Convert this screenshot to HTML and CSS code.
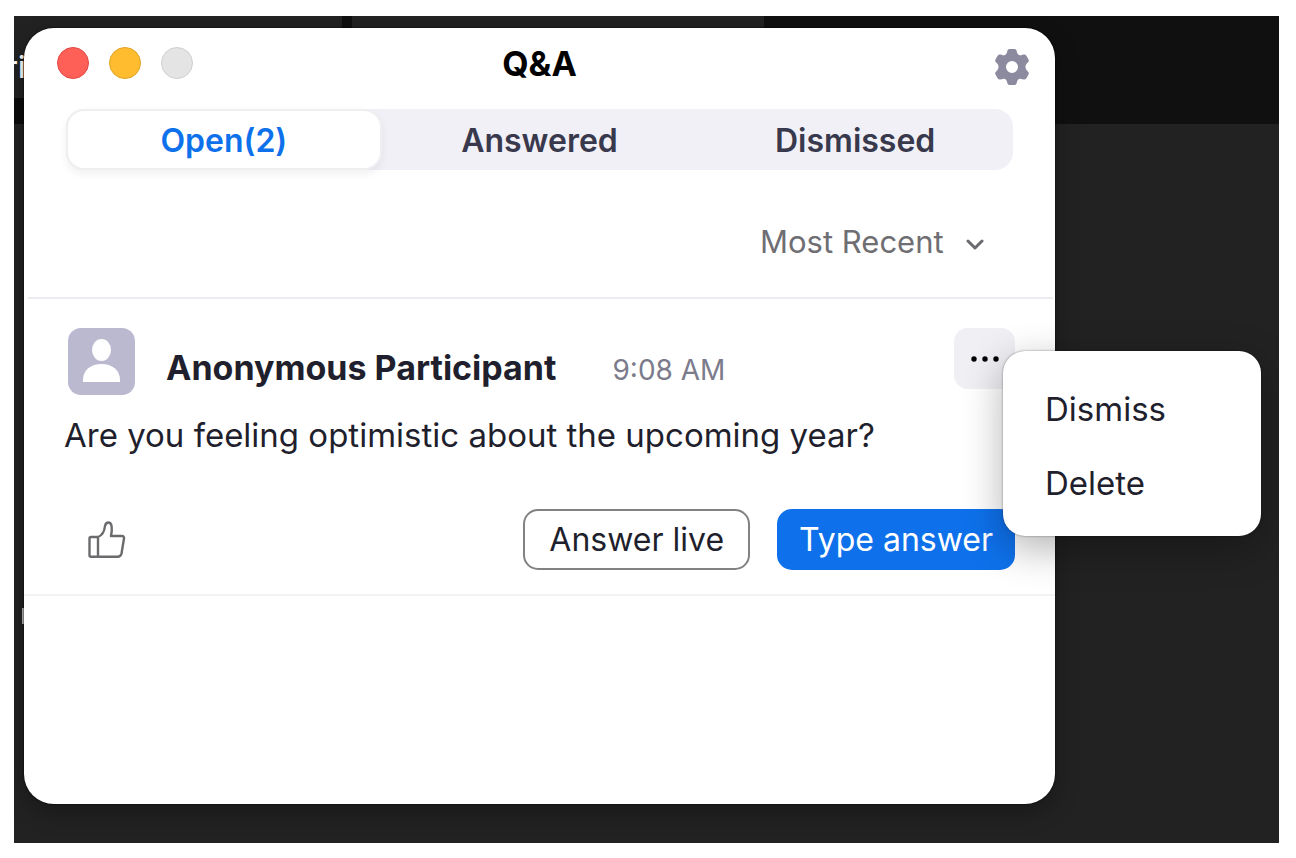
FILE: index.html
```html
<!DOCTYPE html>
<html lang="en">

<head>
    <meta charset="UTF-8" />
    <meta name="viewport" content="width=device-width, initial-scale=1.0" />
    <title>Q&amp;A</title>
    <link rel="stylesheet" href="styles.css">
</head>

<body>
    <div class="desktop">
        <!-- text of the meeting window, behind the panel -->
        <span class="behind-text">ri</span>
        <span class="behind-mark"></span>

        <main class="window">
            <header class="titlebar">
                <div class="lights">
                    <button class="light red" aria-label="Close"></button>
                    <button class="light yellow" aria-label="Minimize"></button>
                    <button class="light gray" aria-label="Zoom" disabled></button>
                </div>
                <h1 class="title">Q&amp;A</h1>
                <button class="settings" aria-label="Settings">
                    <svg width="36" height="38" viewBox="0 0 36 38">
                        <path fill="#8c8a9f" fill-rule="evenodd" d="M15.500 1h5c1.400 0 2 1 2.300 2.500.4 2 1.200 3 2.200 3.500 1 .5 2 .4 3.500-.2 1.600-.6 3-.5 3.700.6l2.200 3.900c.8 1.400.4 2.500-.8 3.500C32 16.300 31.500 17.500 31.500 19s.5 2.700 2.100 4.200c1.200 1 1.600 2.100.8 3.500l-2.200 3.900c-.7 1.100-2.100 1.200-3.700.6-1.500-.6-2.500-.7-3.500-.2s-1.800 1.500-2.200 3.500C22.500 36 21.900 37 20.500 37h-5c-1.400 0-2-1-2.300-2.500-.4-2-1.200-3-2.200-3.500-1-.5-2-.4-3.500.2-1.600.6-3 .5-3.700-.6l-2.200-3.900c-.8-1.400-.4-2.500.8-3.500C4 21.700 4.500 20.500 4.500 19S4 16.300 2.400 14.800c-1.200-1-1.600-2.100-.8-3.500l2.200-3.900c.7-1.100 2.100-1.200 3.700-.6 1.500.6 2.500.7 3.500.2s1.800-1.500 2.200-3.500C13.500 2 14.100 1 15.500 1zM18 13a6 6 0 1 0 0 12 6 6 0 0 0 0-12z"/>
                    </svg>
                </button>
            </header>

            <nav class="tabs">
                <button class="tab active">Open(2)</button>
                <button class="tab">Answered</button>
                <button class="tab">Dismissed</button>
            </nav>

            <div class="filter">
                <select class="sort" id="sort" aria-label="Sort questions">
                    <option>Most Recent</option>
                </select>
                <svg class="chevron" width="18" height="12" viewBox="0 0 18 12">
                    <path d="M2 2l7 7 7-7" fill="none" stroke="#6a6a70" stroke-width="3" stroke-linecap="round" stroke-linejoin="round"/>
                </svg>
            </div>

            <article class="question">
                <div class="question-head">
                    <svg class="avatar" width="67" height="67" viewBox="0 0 67 67">
                        <rect width="67" height="67" rx="13" fill="#bbb9d0"/>
                        <ellipse cx="33.500" cy="22" rx="9.500" ry="11" fill="#fff"/>
                        <path d="M15 54v-2c0-10 8-16 18.500-16S52 42 52 52v2z" fill="#fff"/>
                    </svg>
                    <h2 class="name">Anonymous Participant</h2>
                    <time class="time">9:08 AM</time>
                    <div class="more-wrap">
                        <button class="more" aria-label="More options">
                            <svg width="28" height="6" viewBox="0 0 28 6">
                                <circle cx="3" cy="3" r="2.700"/>
                                <circle cx="14" cy="3" r="2.700"/>
                                <circle cx="25" cy="3" r="2.700"/>
                            </svg>
                        </button>
                        <div class="menu">
                            <button class="menu-item">Dismiss</button>
                            <button class="menu-item">Delete</button>
                        </div>
                    </div>
                </div>

                <p class="question-text">Are you feeling optimistic about the upcoming year?</p>

                <div class="actions">
                    <button class="like" aria-label="Upvote">
                        <svg width="38" height="38" viewBox="0 0 38 38" fill="none" stroke="#6b6b6e" stroke-width="2.400" stroke-linejoin="round">
                            <path d="M10 16v20M3 16h7c5-2 6.500-6 7-11C17.500 2.500 19 1.500 20.500 1.500c3.500 0 4 6 2.500 13.500h11c1.500 0 2.300 1 2 2.500l-2.500 15c-.4 2-1.800 3.200-4 3.200H3c-1 0-1.500-.5-1.500-1.500V17.500C1.500 16.500 2 16 3 16z"/>
                        </svg>
                    </button>
                    <button class="btn btn-live">Answer live</button>
                    <button class="btn btn-type">Type answer</button>
                </div>
            </article>
        </main>
    </div>
</body>

</html>
```
FILE: styles.css
```css
* {
    box-sizing: border-box;
}

body {
    margin: 0;
    padding: 16px 17px 15px 14px;
    min-height: 100vh;
    display: flex;
    background: #fff;
    color: #1f1f2d;
    font-family: Inter, "Liberation Sans", sans-serif;
}

button {
    font-family: inherit;
    color: inherit;
    border: none;
    background: none;
    padding: 0;
    cursor: pointer;
}

svg {
    display: block;
}

/* dark meeting window behind the panel */
.desktop {
    position: relative;
    flex: 1;
    display: flex;
    padding: 12px 224px 39px 10px;
    overflow: hidden;
    background-color: #222;
    background-image:
        linear-gradient(#101010, #101010),
        linear-gradient(#101010, #101010),
        linear-gradient(#0c0c0c, #0c0c0c);
    background-repeat: no-repeat;
    background-size: 515px 108px, 10px 82px, 328px 26px;
    background-position: 100% 0, 328px 0, 0 82px;
}

.behind-text {
    position: absolute;
    left: -8px;
    top: 32px;
    color: #fff;
    font-size: 30px;
    font-weight: 500;
    line-height: 38px;
}

.behind-mark {
    position: absolute;
    left: 8px;
    top: 592px;
    width: 6px;
    height: 16px;
    background: #bbb;
}

/* panel */
.window {
    position: relative;
    flex: 1;
    background: #fff;
    border-radius: 30px;
    box-shadow: 0 0 2px #000, 0 8px 24px rgba(0, 0, 0, 0.3);
}

.titlebar {
    display: grid;
    grid-template-columns: 1fr auto 1fr;
    align-items: start;
    padding: 19px 25px 0;
}

.lights {
    display: flex;
    gap: 20px;
    padding-left: 8px;
}

.light {
    width: 32px;
    height: 32px;
    border-radius: 50%;
}

.red {
    background: #fe5f57;
    border: 1px solid #e04b45;
}

.yellow {
    background: #febc2e;
    border: 1px solid #e0a32a;
}

.gray {
    background: #e4e4e4;
    border: 1px solid #cfcfcf;
}

.title {
    margin: 0;
    font-size: 34px;
    line-height: 34px;
    font-weight: 700;
    color: #000;
}

.settings {
    justify-self: end;
    padding-top: 1px;
}

/* tabs */
.tabs {
    display: grid;
    grid-template-columns: repeat(3, 1fr);
    margin: 23px 42px 0;
    border-radius: 18px;
    background: #f1f0f7;
}

.tab {
    height: 61px;
    padding-top: 2px;
    border-radius: 18px;
    font-size: 32px;
    font-weight: 600;
    color: #39394d;
}

.active {
    background: #fff;
    border: 2px solid #efeff2;
    box-shadow: 0 4px 10px rgba(0, 0, 0, 0.06);
    color: #0e71eb;
}

/* sort order */
.filter {
    display: flex;
    justify-content: flex-end;
    align-items: center;
    gap: 22px;
    margin: 0 2px 0 4px;
    padding: 52px 69px 35px 0;
    border-bottom: 2px solid #ebebf0;
}

.sort {
    appearance: none;
    border: none;
    background: none;
    padding: 0;
    font-family: inherit;
    font-size: 31px;
    line-height: 40px;
    color: #6e6e73;
}

.chevron {
    margin-top: 6px;
}

/* question */
.question {
    padding: 29px 40px 24px;
    border-bottom: 2px solid #f3f3f5;
}

.question-head {
    display: flex;
    align-items: center;
    padding-left: 4px;
}

.name {
    margin: 12px 0 0 31px;
    font-size: 34px;
    line-height: 40px;
    font-weight: 700;
}

.time {
    margin: 16px 0 0 56px;
    font-size: 28px;
    line-height: 36px;
    color: #7b7b8c;
}

.more-wrap {
    position: relative;
    align-self: flex-start;
    margin-left: auto;
}

.more {
    display: flex;
    align-items: center;
    justify-content: center;
    width: 61px;
    height: 61px;
    border-radius: 14px;
    background: #efeff4;
}

.menu {
    position: absolute;
    left: 49px;
    top: 23px;
    width: 258px;
    padding: 21px 0 16px;
    border-radius: 22px;
    background: #fff;
    box-shadow: 0 0 2px rgba(0, 0, 0, 0.5), 0 12px 40px rgba(0, 0, 0, 0.3);
}

.menu-item {
    display: block;
    width: 100%;
    padding-left: 42px;
    font-size: 33px;
    line-height: 74px;
    text-align: left;
}

.question-text {
    margin: 18px 0 0;
    font-size: 33px;
    line-height: 44px;
}

.actions {
    display: flex;
    align-items: center;
    margin-top: 52px;
}

.like {
    margin: 0 auto 0 24px;
}

.btn {
    height: 61px;
    border-radius: 15px;
    font-size: 32px;
}

.btn-live {
    padding: 0 24px;
    border: 2px solid #828282;
}

.btn-type {
    margin-left: 27px;
    padding: 0 22px;
    background: #0e71eb;
    color: #fff;
}
```
